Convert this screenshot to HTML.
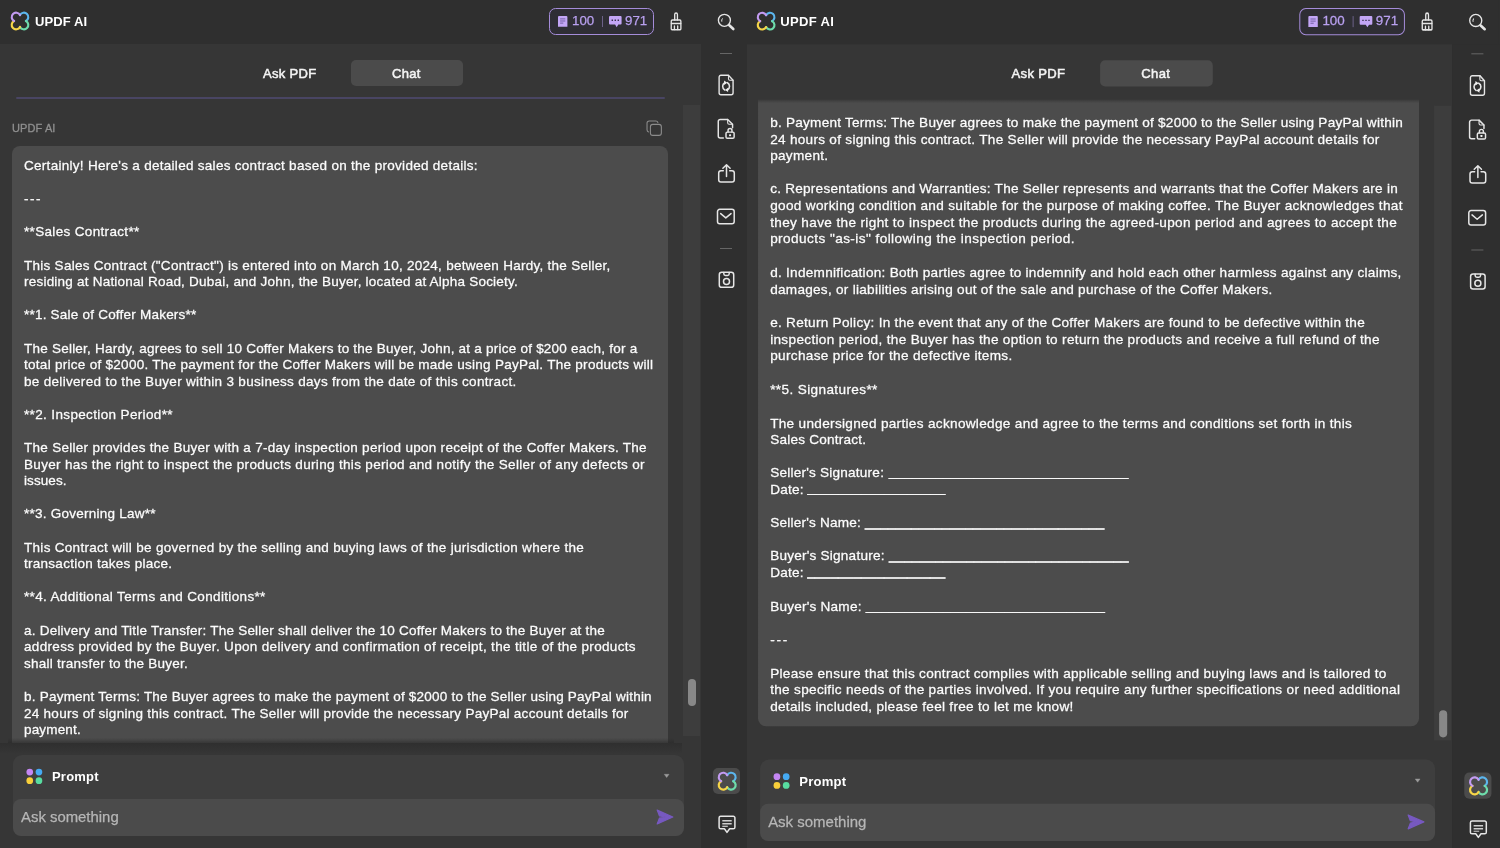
<!DOCTYPE html>
<html><head><meta charset="utf-8"><title>UPDF AI</title>
<style>
*{box-sizing:border-box;margin:0;padding:0}
html,body{width:1500px;height:848px;overflow:hidden;background:#2f2f2f}
body{font-family:"Liberation Sans",sans-serif;color:#fff;position:relative}
.half{position:absolute;left:0;top:0;width:747px;height:860px;transform-origin:0 0;overflow:hidden;background:#2f2f2f}
.half.r{left:746.9px;transform:scale(1.006);width:752px}
.panel{position:absolute;left:0;top:0;width:700.5px;height:860px;background:#363636}
.hdr{position:absolute;left:0;top:0;width:747px;height:44px;background:#2f2f2f}
.side{position:absolute;left:700.5px;top:44px;width:52px;height:820px;background:#2f2f2f}
.logo{position:absolute;left:10px;top:10.5px;width:20px;height:20px}
.title{position:absolute;left:34.5px;top:13.5px;font-weight:bold;font-size:13px;line-height:15px;letter-spacing:.1px}
.badge{position:absolute;left:549px;top:7.5px;width:104.5px;height:27px;border:1.5px solid #a58cd9;border-radius:6.5px;background:#2f2e35}
.bnum{-webkit-text-stroke:.25px #b9a0f0;position:absolute;top:13.2px;font-size:13.3px;line-height:15px;color:#b9a0f0}
.tab{position:absolute;font-size:13px;line-height:15px;letter-spacing:.3px;color:#f4f4f4;-webkit-text-stroke:.5px #f4f4f4}
.chat{position:absolute;left:350.5px;top:59.7px;width:112.5px;height:26.5px;border-radius:5px;background:#4b4b4b}
.pline{position:absolute;left:16px;top:97.4px;width:649px;height:1.5px;background:#494563;border-radius:1px}
.who{position:absolute;left:12.3px;top:122px;font-size:11px;line-height:13px;color:#8f8f8f;letter-spacing:.1px;-webkit-text-stroke:.3px #8f8f8f}
.bubble{position:absolute;background:#4c4c4c;border-radius:8px}
.txt{position:absolute;opacity:.999;-webkit-text-stroke:.27px #fdfdfd;font-size:13.5px;letter-spacing:.29px;line-height:16.6px;color:#fdfdfd;white-space:nowrap}
.ln{height:16.6px;white-space:nowrap}
.lab{display:inline-block;white-space:pre}
.us{display:inline-block;letter-spacing:0;transform-origin:0 50%;position:relative;top:-1.6px;-webkit-text-stroke:0;text-shadow:0 .45px 0 #fdfdfd}
.lab{letter-spacing:.22px}
.track{position:absolute;left:682.5px;width:17.2px;background:#3d3d3d}
.thumb{position:absolute;left:687.9px;width:8.6px;border-radius:4.3px;background:#888}
.prompt{position:absolute;left:12.5px;top:754.5px;width:671.5px;height:60px;border-radius:9px;background:#3e3e3e}
.ptxt{position:absolute;left:52px;top:768.5px;font-weight:bold;font-size:13px;line-height:15px;letter-spacing:.2px}
.input{position:absolute;left:12.5px;top:799px;width:671.5px;height:36.5px;border-radius:8px;background:#4b4b4b}
.ph{position:absolute;left:20.6px;top:809.3px;font-size:14.9px;line-height:17px;color:#b6b6b6;-webkit-text-stroke:.25px #b6b6b6}
svg{position:absolute;overflow:visible}
.ic{stroke:#e6e6e6;fill:none;stroke-width:1.5;stroke-linecap:round;stroke-linejoin:round}
.title,.tab,.ptxt,.ph,.who,.bnum,.txt{will-change:transform}
.half.r .logo{margin-left:-1px}
.half.r .title{margin-left:-1.3px;letter-spacing:.3px}
.sep{position:absolute;left:720px;width:12px;height:1px;background:#666}
.act{position:absolute;left:713.2px;top:767.5px;width:26.4px;height:26.4px;border-radius:5px;background:#4b4b4b}
.fade{position:absolute;left:12px;top:737px;width:660px;height:12px;background:linear-gradient(#4c4c4c00,#36363600 0%,#363636 55%)}
</style></head><body>

<!-- ============ LEFT HALF ============ -->
<div class="half l">
 <div class="panel"></div>
 <div class="hdr"></div>
 <div class="side"></div>
  <svg class="logo" viewBox="0 0 20 20" style="left:10.3px;top:11px;width:20px;height:20px"><g fill="none" stroke-width="2.15" stroke-linecap="round">
  <path d="M10 4.06A4.4 4.4 0 1 1 15.94 10" stroke="#5cb6ee"/>
  <path d="M15.94 10A4.4 4.4 0 1 1 10 15.94" stroke="#6edcab"/>
  <path d="M10 15.94A4.4 4.4 0 1 1 4.06 10" stroke="#f6d548"/>
  <path d="M4.06 10A4.4 4.4 0 1 1 10 4.06" stroke="#c39bf2"/>
 </g></svg>
 <div class="title">UPDF AI</div>
 <div class="badge"></div>
 <svg style="left:558px;top:16px;width:9.4px;height:10.8px" viewBox="0 0 9.4 10.8"><path d="M1 0h7.4a1 1 0 0 1 1 1v9.8H0V1a1 1 0 0 1 1-1z" fill="#c3a6f6"/><path d="M2.1 2.9h5.2M2.1 5h5.2M2.1 7.100h3.200" stroke="#5a4888" stroke-width=".75"/></svg>
 <div class="bnum" style="left:571.5px">100</div>
 <div style="position:absolute;left:601.7px;top:15.5px;width:1.1px;height:11.3px;background:#6c6188"></div>
 <svg style="left:609.2px;top:16px;width:12.6px;height:11.4px" viewBox="0 0 12.6 11.4"><path d="M1 0h10.6a1 1 0 0 1 1 1v6.6a1 1 0 0 1-1 1H9.3L7.7 11.2 6.1 8.6H1a1 1 0 0 1-1-1V1a1 1 0 0 1 1-1z" fill="#c3a6f6"/><path d="M2.6 4.3h1.4M5.6 4.3h1.4M8.6 4.3h1.4" stroke="#3a3150" stroke-width="1.4"/></svg>
 <div class="bnum" style="left:624.8px">971</div>
 <!-- brush -->
 <svg style="left:669.7px;top:12px;width:12.4px;height:19px" viewBox="0 0 14 19" preserveAspectRatio="none"><g class="ic" stroke-width="1.35"><path d="M5.3 8V2.6a1.55 1.55 0 0 1 3.1 0V8"/><path d="M2.6 8h8.5a1.2 1.2 0 0 1 1.2 1.2v7.6a.9.9 0 0 1-.9.9H2.3a.9.9 0 0 1-.9-.9V9.200a1.200 1.200 0 0 1 1.200-1.200z"/><path d="M1.600 11.400h10.500M5 14v3.500M8.700 14v3.500"/></g></svg>
 <!-- search -->
 <svg style="left:716px;top:12px;width:20px;height:20px" viewBox="0 0 20 20"><g class="ic"><circle cx="8.4" cy="8.3" r="6" stroke-width="1.35"/><path d="M13.300 13.300l4 3.700" stroke-width="2.600"/><path d="M5.700 9.300a2.800 2.800 0 0 1 .6-2.600" stroke-width="1"/></g></svg>
 <!-- sidebar icons -->
 <div class="sep" style="top:52.8px"></div>
 <svg style="left:718.300px;top:73.500px;width:16.200px;height:22px" viewBox="0 0 17.500 22" preserveAspectRatio="none"><g class="ic" stroke-width="1.4"><path d="M11.300 1.200H3.200a2 2 0 0 0-2 2v15.600a2 2 0 0 0 2 2h11.100a2 2 0 0 0 2-2V6.200z"/><path d="M11.300 1.200v3.500a1.500 1.500 0 0 0 1.500 1.500h3.500" stroke-width="1.100"/><path d="M7.300 15.900A4 4 0 0 1 7.300 8.700M10.200 8.700A4 4 0 0 1 10.200 15.900" stroke-width="1.700"/></g><path d="M6.600 6.500v4.400l3.400-2.200zM10.900 13.700v4.400l-3.400-2.200z" fill="#f0f0f0"/></svg>
 <svg style="left:716.900px;top:118px;width:18.600px;height:22px" viewBox="0 0 19 22"><g class="ic" stroke-width="1.4"><path d="M6.500 20.200H3.300a2 2 0 0 1-2-2V3.200a2 2 0 0 1 2-2h7.600l5 5v3.600"/><path d="M10.900 1.200v3.500a1.500 1.500 0 0 0 1.500 1.500h3.500" stroke-width="1.100"/><rect x="9.200" y="14.200" width="8.300" height="6.200" rx="1.300"/><path d="M11.300 14V12.600a2 2 0 0 1 4 0V14"/></g><rect x="12.300" y="16.300" width="2.100" height="2" rx=".5" fill="#f0f0f0"/></svg>
 <svg style="left:717px;top:163px;width:19px;height:21px" viewBox="0 0 19 21"><g class="ic" stroke-width="1.45"><path d="M6.300 7.700H4a2.300 2.300 0 0 0-2.300 2.300v6.700A2.300 2.300 0 0 0 4 19h11a2.300 2.300 0 0 0 2.300-2.300V10a2.300 2.300 0 0 0-2.300-2.300h-2.300"/><path d="M9.500 13.500V1.900M5.900 5.300l3.600-3.500 3.600 3.500"/></g></svg>
 <svg style="left:715.9px;top:208.4px;width:19px;height:17.5px" viewBox="0 0 19 17.5"><g class="ic" stroke-width="1.45"><rect x="1.5" y="1.3" width="16.7" height="14.4" rx="2.3"/><path d="M4.700 5.600l5.100 4.300L15 5.600"/></g></svg>
 <div class="sep" style="top:248.100px"></div>
 <svg style="left:718px;top:271px;width:17px;height:17.500px" viewBox="0 0 17 17.500"><g class="ic" stroke-width="1.45"><rect x="1.300" y="1.300" width="14.400" height="15" rx="2.400"/><path d="M5.800 1.500v1.300a1.700 1.700 0 0 0 1.700 1.700h2a1.700 1.700 0 0 0 1.700-1.700V1.500"/><circle cx="8.500" cy="10.600" r="3"/></g></svg>

 <div class="chat"></div>
 <div class="tab" style="left:263px;top:65.5px">Ask PDF</div>
 <div class="tab" style="left:391.7px;top:65.5px">Chat</div>
 <div class="pline"></div>
 <div class="who">UPDF AI</div>
 <svg style="left:646.400px;top:119.700px;width:16.400px;height:16.400px" viewBox="0 0 17.500 17.500"><g fill="none" stroke="#8c8c8c" stroke-width="1.150" stroke-linecap="round"><rect x="4.700" y="4.700" width="11.700" height="11.700" rx="2.600"/><path d="M2.700 12.700A2.300 2.300 0 0 1 1.100 10.500V3.500a2.400 2.400 0 0 1 2.400-2.400h7a2.300 2.300 0 0 1 2.200 1.600"/></g></svg>
 <div class="track" style="top:105px;height:631px"></div>
 <div class="thumb" style="top:679.2px;height:27.2px"></div>
 <div class="bubble" style="left:12.4px;top:145.5px;width:655.6px;height:620px;border-radius:8px 8px 0 0"></div>
 <div class="txt" style="left:23.8px;top:157.9px">
<div class="ln" style="letter-spacing:0.288px"><span>Certainly! Here's a detailed sales contract based on the provided details:</span></div>
<div class="ln">&nbsp;</div>
<div class="ln" style="letter-spacing:1.533px"><span>---</span></div>
<div class="ln">&nbsp;</div>
<div class="ln" style="letter-spacing:0.335px"><span>**Sales Contract**</span></div>
<div class="ln">&nbsp;</div>
<div class="ln" style="letter-spacing:0.274px"><span>This Sales Contract ("Contract") is entered into on March 10, 2024, between Hardy, the Seller,</span></div>
<div class="ln" style="letter-spacing:0.221px"><span>residing at National Road, Dubai, and John, the Buyer, located at Alpha Society.</span></div>
<div class="ln">&nbsp;</div>
<div class="ln" style="letter-spacing:0.22px"><span>**1. Sale of Coffer Makers**</span></div>
<div class="ln">&nbsp;</div>
<div class="ln" style="letter-spacing:0.231px"><span>The Seller, Hardy, agrees to sell 10 Coffer Makers to the Buyer, John, at a price of $200 each, for a</span></div>
<div class="ln" style="letter-spacing:0.282px"><span>total price of $2000. The payment for the Coffer Makers will be made using PayPal. The products will</span></div>
<div class="ln" style="letter-spacing:0.314px"><span>be delivered to the Buyer within 3 business days from the date of this contract.</span></div>
<div class="ln">&nbsp;</div>
<div class="ln" style="letter-spacing:0.357px"><span>**2. Inspection Period**</span></div>
<div class="ln">&nbsp;</div>
<div class="ln" style="letter-spacing:0.286px"><span>The Seller provides the Buyer with a 7-day inspection period upon receipt of the Coffer Makers. The</span></div>
<div class="ln" style="letter-spacing:0.333px"><span>Buyer has the right to inspect the products during this period and notify the Seller of any defects or</span></div>
<div class="ln" style="letter-spacing:0.081px"><span>issues.</span></div>
<div class="ln">&nbsp;</div>
<div class="ln" style="letter-spacing:0.244px"><span>**3. Governing Law**</span></div>
<div class="ln">&nbsp;</div>
<div class="ln" style="letter-spacing:0.3px"><span>This Contract will be governed by the selling and buying laws of the jurisdiction where the</span></div>
<div class="ln" style="letter-spacing:0.269px"><span>transaction takes place.</span></div>
<div class="ln">&nbsp;</div>
<div class="ln" style="letter-spacing:0.343px"><span>**4. Additional Terms and Conditions**</span></div>
<div class="ln">&nbsp;</div>
<div class="ln" style="letter-spacing:0.224px"><span>a. Delivery and Title Transfer: The Seller shall deliver the 10 Coffer Makers to the Buyer at the</span></div>
<div class="ln" style="letter-spacing:0.329px"><span>address provided by the Buyer. Upon delivery and confirmation of receipt, the title of the products</span></div>
<div class="ln" style="letter-spacing:0.259px"><span>shall transfer to the Buyer.</span></div>
<div class="ln">&nbsp;</div>
<div class="ln" style="letter-spacing:0.227px"><span>b. Payment Terms: The Buyer agrees to make the payment of $2000 to the Seller using PayPal within</span></div>
<div class="ln" style="letter-spacing:0.273px"><span>24 hours of signing this contract. The Seller will provide the necessary PayPal account details for</span></div>
<div class="ln" style="letter-spacing:0.159px"><span>payment.</span></div>
 </div>
 <div style="position:absolute;left:0;top:742.5px;width:682px;height:30px;background:#363636"></div>
 <div style="position:absolute;left:0;top:742.5px;width:682px;height:11px;background:linear-gradient(#2f2f2f,#333 60%,#363636)"></div>
 <div style="position:absolute;left:8px;top:738px;width:666px;height:5px;background:linear-gradient(rgba(40,40,40,0),rgba(40,40,40,.55))"></div>
  <div class="prompt"></div>
 <svg style="left:25px;top:767px;width:20px;height:20px" viewBox="0 0 20 20"><circle cx="4.750" cy="5.050" r="3.350" fill="#c486f3"/><circle cx="13.950" cy="5.050" r="3.350" fill="#45aaf2"/><circle cx="4.750" cy="13.700" r="3.350" fill="#f8cf3a"/><circle cx="13.950" cy="13.700" r="3.350" fill="#58dca0"/></svg>
 <div class="ptxt">Prompt</div>
 <svg style="left:663.600px;top:774px;width:5.300px;height:3.800px" viewBox="0 0 6.500 4.500"><path d="M.3.300h5.900L3.250 4.300z" fill="#9c9c9c" stroke="#9c9c9c" stroke-width=".5" stroke-linejoin="round"/></svg>
 <div class="input"></div>
 <div class="ph">Ask something</div>
 <svg style="left:655.500px;top:808.500px;width:18px;height:16px" viewBox="0 0 18 16"><path d="M1.200 1.100L16.800 8 1.200 14.900l2.200-5.700L9.500 8 3.400 6.800z" fill="#7759c0" stroke="#7759c0" stroke-width="1.200" stroke-linejoin="round"/></svg>
 <div class="act"></div>
 <svg viewBox="0 0 20 20" style="left:716.6px;top:771px;width:20.4px;height:20.4px"><g fill="none" stroke-width="2.15" stroke-linecap="round">
  <path d="M10 4.06A4.4 4.4 0 1 1 15.94 10" stroke="#5cb6ee"/>
  <path d="M15.94 10A4.4 4.4 0 1 1 10 15.94" stroke="#6edcab"/>
  <path d="M10 15.94A4.4 4.4 0 1 1 4.06 10" stroke="#f6d548"/>
  <path d="M4.06 10A4.4 4.4 0 1 1 10 4.06" stroke="#c39bf2"/>
 </g></svg>
 <svg style="left:717.500px;top:815px;width:18px;height:19px" viewBox="0 0 18 19"><g class="ic" stroke-width="1.400"><path d="M2.700 1.200h12.600a1.600 1.600 0 0 1 1.600 1.600v9.400a1.600 1.600 0 0 1-1.600 1.600h-3.700L9 17.400 6.400 13.800H2.700a1.600 1.600 0 0 1-1.600-1.600V2.800a1.600 1.600 0 0 1 1.600-1.600z"/></g><path d="M4.300 5h9.400v1.500H4.300zM4.300 8h9.400v1.500H4.300z" fill="#cfcfcf"/><path d="M4.300 10.700h5.500v1.200H4.300z" fill="#cfcfcf"/></svg>

</div>

<!-- ============ RIGHT HALF ============ -->
<div class="half r">
 <div class="panel"></div>
 <div class="hdr"></div>
 <div class="side"></div>
  <svg class="logo" viewBox="0 0 20 20" style="left:10.3px;top:11px;width:20px;height:20px"><g fill="none" stroke-width="2.15" stroke-linecap="round">
  <path d="M10 4.06A4.4 4.4 0 1 1 15.94 10" stroke="#5cb6ee"/>
  <path d="M15.94 10A4.4 4.4 0 1 1 10 15.94" stroke="#6edcab"/>
  <path d="M10 15.94A4.4 4.4 0 1 1 4.06 10" stroke="#f6d548"/>
  <path d="M4.06 10A4.4 4.4 0 1 1 10 4.06" stroke="#c39bf2"/>
 </g></svg>
 <div class="title">UPDF AI</div>
 <div class="badge"></div>
 <svg style="left:558px;top:16px;width:9.4px;height:10.8px" viewBox="0 0 9.4 10.8"><path d="M1 0h7.4a1 1 0 0 1 1 1v9.8H0V1a1 1 0 0 1 1-1z" fill="#c3a6f6"/><path d="M2.1 2.9h5.2M2.1 5h5.2M2.1 7.100h3.200" stroke="#5a4888" stroke-width=".75"/></svg>
 <div class="bnum" style="left:571.5px">100</div>
 <div style="position:absolute;left:601.7px;top:15.5px;width:1.1px;height:11.3px;background:#6c6188"></div>
 <svg style="left:609.2px;top:16px;width:12.6px;height:11.4px" viewBox="0 0 12.6 11.4"><path d="M1 0h10.6a1 1 0 0 1 1 1v6.6a1 1 0 0 1-1 1H9.3L7.7 11.2 6.1 8.6H1a1 1 0 0 1-1-1V1a1 1 0 0 1 1-1z" fill="#c3a6f6"/><path d="M2.6 4.3h1.4M5.6 4.3h1.4M8.6 4.3h1.4" stroke="#3a3150" stroke-width="1.4"/></svg>
 <div class="bnum" style="left:624.8px">971</div>
 <!-- brush -->
 <svg style="left:669.7px;top:12px;width:12.4px;height:19px" viewBox="0 0 14 19" preserveAspectRatio="none"><g class="ic" stroke-width="1.35"><path d="M5.3 8V2.6a1.55 1.55 0 0 1 3.1 0V8"/><path d="M2.6 8h8.5a1.2 1.2 0 0 1 1.2 1.2v7.6a.9.9 0 0 1-.9.9H2.3a.9.9 0 0 1-.9-.9V9.200a1.200 1.200 0 0 1 1.200-1.200z"/><path d="M1.600 11.400h10.500M5 14v3.500M8.700 14v3.500"/></g></svg>
 <!-- search -->
 <svg style="left:716px;top:12px;width:20px;height:20px" viewBox="0 0 20 20"><g class="ic"><circle cx="8.4" cy="8.3" r="6" stroke-width="1.35"/><path d="M13.300 13.300l4 3.700" stroke-width="2.600"/><path d="M5.700 9.300a2.800 2.800 0 0 1 .6-2.600" stroke-width="1"/></g></svg>
 <!-- sidebar icons -->
 <div class="sep" style="top:52.8px"></div>
 <svg style="left:718.300px;top:73.500px;width:16.200px;height:22px" viewBox="0 0 17.500 22" preserveAspectRatio="none"><g class="ic" stroke-width="1.4"><path d="M11.300 1.200H3.200a2 2 0 0 0-2 2v15.600a2 2 0 0 0 2 2h11.100a2 2 0 0 0 2-2V6.200z"/><path d="M11.300 1.200v3.500a1.500 1.500 0 0 0 1.500 1.500h3.500" stroke-width="1.100"/><path d="M7.300 15.900A4 4 0 0 1 7.300 8.700M10.200 8.700A4 4 0 0 1 10.200 15.900" stroke-width="1.700"/></g><path d="M6.600 6.500v4.400l3.400-2.200zM10.900 13.700v4.400l-3.400-2.200z" fill="#f0f0f0"/></svg>
 <svg style="left:716.900px;top:118px;width:18.600px;height:22px" viewBox="0 0 19 22"><g class="ic" stroke-width="1.4"><path d="M6.500 20.200H3.300a2 2 0 0 1-2-2V3.200a2 2 0 0 1 2-2h7.600l5 5v3.600"/><path d="M10.900 1.200v3.500a1.500 1.500 0 0 0 1.500 1.500h3.500" stroke-width="1.100"/><rect x="9.200" y="14.200" width="8.300" height="6.200" rx="1.300"/><path d="M11.300 14V12.600a2 2 0 0 1 4 0V14"/></g><rect x="12.300" y="16.300" width="2.100" height="2" rx=".5" fill="#f0f0f0"/></svg>
 <svg style="left:717px;top:163px;width:19px;height:21px" viewBox="0 0 19 21"><g class="ic" stroke-width="1.45"><path d="M6.300 7.700H4a2.300 2.300 0 0 0-2.300 2.300v6.700A2.300 2.300 0 0 0 4 19h11a2.300 2.300 0 0 0 2.300-2.300V10a2.300 2.300 0 0 0-2.300-2.300h-2.300"/><path d="M9.500 13.500V1.900M5.900 5.300l3.600-3.500 3.600 3.500"/></g></svg>
 <svg style="left:715.9px;top:208.4px;width:19px;height:17.5px" viewBox="0 0 19 17.5"><g class="ic" stroke-width="1.45"><rect x="1.5" y="1.3" width="16.7" height="14.4" rx="2.3"/><path d="M4.700 5.600l5.100 4.300L15 5.600"/></g></svg>
 <div class="sep" style="top:248.100px"></div>
 <svg style="left:718px;top:271px;width:17px;height:17.500px" viewBox="0 0 17 17.500"><g class="ic" stroke-width="1.45"><rect x="1.300" y="1.300" width="14.400" height="15" rx="2.400"/><path d="M5.800 1.500v1.300a1.700 1.700 0 0 0 1.700 1.700h2a1.700 1.700 0 0 0 1.700-1.700V1.500"/><circle cx="8.500" cy="10.600" r="3"/></g></svg>

 <div class="chat"></div>
 <div class="tab" style="left:263px;top:65.5px">Ask PDF</div>
 <div class="tab" style="left:391.7px;top:65.5px">Chat</div>
 <div class="track" style="top:105px;height:631px"></div>
 <div class="thumb" style="top:706.2px;height:27px"></div>
 <div class="bubble" style="left:11.3px;top:98.5px;width:656.7px;height:623px;border-radius:0 0 8px 8px;background:linear-gradient(#3a3a3a,#4c4c4c 3.5px)"></div>
 <div class="txt" style="left:22.6px;top:113.6px">
<div class="ln" style="letter-spacing:0.24px"><span>b. Payment Terms: The Buyer agrees to make the payment of $2000 to the Seller using PayPal within</span></div>
<div class="ln" style="letter-spacing:0.285px"><span>24 hours of signing this contract. The Seller will provide the necessary PayPal account details for</span></div>
<div class="ln" style="letter-spacing:0.298px"><span>payment.</span></div>
<div class="ln">&nbsp;</div>
<div class="ln" style="letter-spacing:0.243px"><span>c. Representations and Warranties: The Seller represents and warrants that the Coffer Makers are in</span></div>
<div class="ln" style="letter-spacing:0.33px"><span>good working condition and suitable for the purpose of making coffee. The Buyer acknowledges that</span></div>
<div class="ln" style="letter-spacing:0.356px"><span>they have the right to inspect the products during the agreed-upon period and agrees to accept the</span></div>
<div class="ln" style="letter-spacing:0.43px"><span>products "as-is" following the inspection period.</span></div>
<div class="ln">&nbsp;</div>
<div class="ln" style="letter-spacing:0.274px"><span>d. Indemnification: Both parties agree to indemnify and hold each other harmless against any claims,</span></div>
<div class="ln" style="letter-spacing:0.273px"><span>damages, or liabilities arising out of the sale and purchase of the Coffer Makers.</span></div>
<div class="ln">&nbsp;</div>
<div class="ln" style="letter-spacing:0.281px"><span>e. Return Policy: In the event that any of the Coffer Makers are found to be defective within the</span></div>
<div class="ln" style="letter-spacing:0.33px"><span>inspection period, the Buyer has the option to return the products and receive a full refund of the</span></div>
<div class="ln" style="letter-spacing:0.331px"><span>purchase price for the defective items.</span></div>
<div class="ln">&nbsp;</div>
<div class="ln" style="letter-spacing:0.379px"><span>**5. Signatures**</span></div>
<div class="ln">&nbsp;</div>
<div class="ln" style="letter-spacing:0.313px"><span>The undersigned parties acknowledge and agree to the terms and conditions set forth in this</span></div>
<div class="ln" style="letter-spacing:0.22px"><span>Sales Contract.</span></div>
<div class="ln">&nbsp;</div>
<div class="ln"><span class="lab" style="width:117.86px">Seller's Signature: </span><span class="us" style="transform:scaleX(1.0232)">_______________________________</span></div>
<div class="ln"><span class="lab" style="width:37.04px">Date: </span><span class="us" style="transform:scaleX(1.0157)">__________________</span></div>
<div class="ln">&nbsp;</div>
<div class="ln"><span class="lab" style="width:94.20px">Seller's Name: </span><span class="us" style="transform:scaleX(1.0243)">_______________________________</span></div>
<div class="ln">&nbsp;</div>
<div class="ln"><span class="lab" style="width:117.86px">Buyer's Signature: </span><span class="us" style="transform:scaleX(1.0245)">_______________________________</span></div>
<div class="ln"><span class="lab" style="width:37.04px">Date: </span><span class="us" style="transform:scaleX(1.0157)">__________________</span></div>
<div class="ln">&nbsp;</div>
<div class="ln"><span class="lab" style="width:95.10px">Buyer's Name: </span><span class="us" style="transform:scaleX(1.0217)">_______________________________</span></div>
<div class="ln">&nbsp;</div>
<div class="ln" style="letter-spacing:1.784px"><span>---</span></div>
<div class="ln">&nbsp;</div>
<div class="ln" style="letter-spacing:0.29px"><span>Please ensure that this contract complies with applicable selling and buying laws and is tailored to</span></div>
<div class="ln" style="letter-spacing:0.315px"><span>the specific needs of the parties involved. If you require any further specifications or need additional</span></div>
<div class="ln" style="letter-spacing:0.285px"><span>details included, please feel free to let me know!</span></div>
 </div>
  <div class="prompt"></div>
 <svg style="left:25px;top:767px;width:20px;height:20px" viewBox="0 0 20 20"><circle cx="4.750" cy="5.050" r="3.350" fill="#c486f3"/><circle cx="13.950" cy="5.050" r="3.350" fill="#45aaf2"/><circle cx="4.750" cy="13.700" r="3.350" fill="#f8cf3a"/><circle cx="13.950" cy="13.700" r="3.350" fill="#58dca0"/></svg>
 <div class="ptxt">Prompt</div>
 <svg style="left:663.600px;top:774px;width:5.300px;height:3.800px" viewBox="0 0 6.500 4.500"><path d="M.3.300h5.900L3.250 4.300z" fill="#9c9c9c" stroke="#9c9c9c" stroke-width=".5" stroke-linejoin="round"/></svg>
 <div class="input"></div>
 <div class="ph">Ask something</div>
 <svg style="left:655.500px;top:808.500px;width:18px;height:16px" viewBox="0 0 18 16"><path d="M1.200 1.100L16.800 8 1.200 14.900l2.200-5.700L9.500 8 3.400 6.800z" fill="#7759c0" stroke="#7759c0" stroke-width="1.200" stroke-linejoin="round"/></svg>
 <div class="act"></div>
 <svg viewBox="0 0 20 20" style="left:716.6px;top:771px;width:20.4px;height:20.4px"><g fill="none" stroke-width="2.15" stroke-linecap="round">
  <path d="M10 4.06A4.4 4.4 0 1 1 15.94 10" stroke="#5cb6ee"/>
  <path d="M15.94 10A4.4 4.4 0 1 1 10 15.94" stroke="#6edcab"/>
  <path d="M10 15.94A4.4 4.4 0 1 1 4.06 10" stroke="#f6d548"/>
  <path d="M4.06 10A4.4 4.4 0 1 1 10 4.06" stroke="#c39bf2"/>
 </g></svg>
 <svg style="left:717.500px;top:815px;width:18px;height:19px" viewBox="0 0 18 19"><g class="ic" stroke-width="1.400"><path d="M2.700 1.200h12.600a1.600 1.600 0 0 1 1.600 1.600v9.400a1.600 1.600 0 0 1-1.600 1.600h-3.700L9 17.400 6.400 13.800H2.700a1.600 1.600 0 0 1-1.600-1.600V2.800a1.600 1.600 0 0 1 1.600-1.600z"/></g><path d="M4.300 5h9.400v1.500H4.300zM4.300 8h9.400v1.500H4.300z" fill="#cfcfcf"/><path d="M4.300 10.700h5.500v1.200H4.300z" fill="#cfcfcf"/></svg>

</div>
</body></html>
